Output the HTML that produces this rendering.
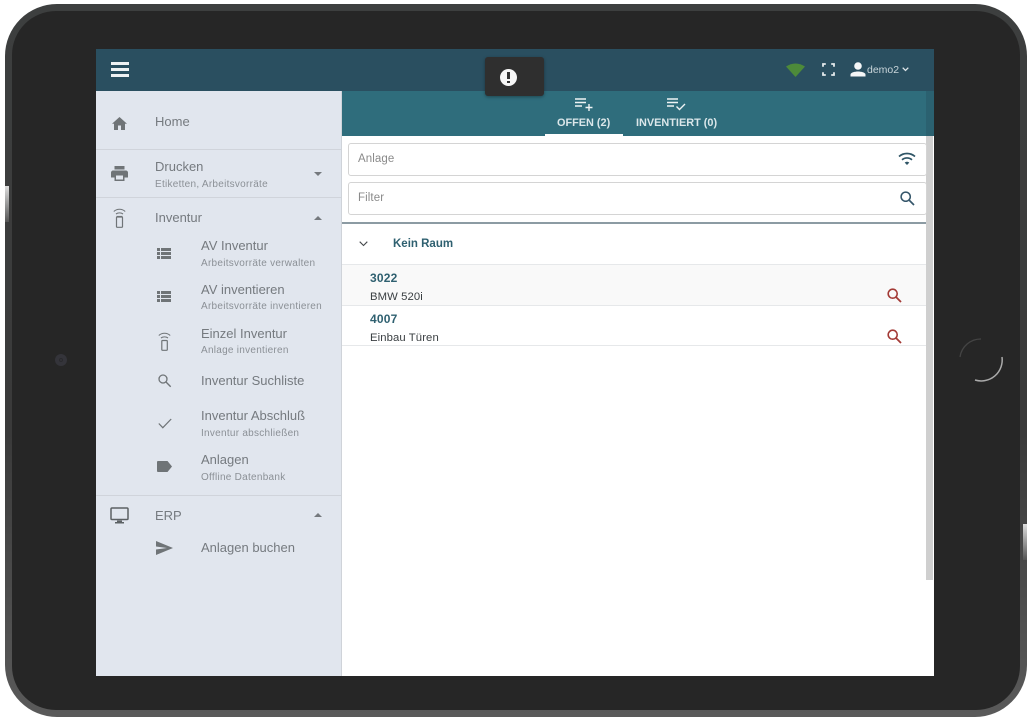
<!DOCTYPE html>
<html><head><meta charset="utf-8">
<style>
html,body{margin:0;padding:0;background:#fff}
#p{position:relative;width:1030px;height:721px;overflow:hidden;background:#fff;font-family:"Liberation Sans",sans-serif;filter:blur(.3px)}
.a{position:absolute;white-space:nowrap}
.t{position:absolute;white-space:nowrap;font-size:13px;color:#757a7f;line-height:16px;letter-spacing:0;margin-top:1px}
.s{position:absolute;white-space:nowrap;font-size:10px;color:#8b9096;line-height:12px;letter-spacing:.27px}
.l{position:absolute;height:1px;background:#d0d4db;left:96px;width:245px}
svg{position:absolute;overflow:visible}
.m{font-size:11.3px;color:#3a3f42;letter-spacing:.1px;line-height:14px;position:absolute;white-space:nowrap}
.n{font-size:12px;font-weight:bold;color:#2f6070;letter-spacing:.2px;line-height:14px;position:absolute;white-space:nowrap}
</style></head><body><div id="p">
<!-- device -->
<div class="a" style="left:5px;top:4px;width:1022px;height:713px;border-radius:52px;background:linear-gradient(#3d3f3f,#3a3a3a 60%,#5a5a5a);"></div>
<div class="a" style="left:12px;top:11px;width:1008px;height:699px;border-radius:44px;background:#262626"></div>
<div class="a" style="left:5px;top:186px;width:4px;height:36px;background:linear-gradient(#ddd,#555)"></div>
<div class="a" style="left:1023px;top:524px;width:4px;height:36px;background:linear-gradient(#ddd,#555)"></div>
<div class="a" style="left:55px;top:354px;width:12px;height:12px;border-radius:50%;background:#34343a"></div>
<div class="a" style="left:59px;top:358px;width:4px;height:4px;border-radius:50%;border:1px solid #2a2a2e;box-sizing:border-box"></div>
<svg style="left:958px;top:337px" width="46" height="46" viewBox="0 0 46 46"><path d="M2 20A21 21 0 0 1 23 2" fill="none" stroke="#444" stroke-width="1.3"/><path d="M44 20A21 21 0 0 1 17 43" fill="none" stroke="#aaa" stroke-width="1.5"/></svg>

<!-- screen -->
<div class="a" style="left:96px;top:49px;width:838px;height:627px;background:#fff"></div>
<div class="a" style="left:96px;top:49px;width:838px;height:42px;background:#2a4f60"></div>
<div class="a" style="left:342px;top:91px;width:592px;height:45px;background:#2f6d7c"></div>
<div class="a" style="left:96px;top:91px;width:245px;height:585px;background:#e1e6ee;border-right:1px solid #cfd3d9"></div>
<!-- scrollbar -->
<div class="a" style="left:926px;top:91px;width:8px;height:45px;background:#2b6170"></div>
<div class="a" style="left:926px;top:136px;width:7px;height:444px;background:#cfcfcf"></div>

<!-- header -->
<div class="a" style="left:111px;top:62px;width:18px;height:3px;background:#eef2f4"></div>
<div class="a" style="left:111px;top:68px;width:18px;height:3px;background:#eef2f4"></div>
<div class="a" style="left:111px;top:74px;width:18px;height:3px;background:#eef2f4"></div>

<div class="a" style="left:485px;top:57px;width:59px;height:39px;border-radius:3px;background:#2f2f2f;box-shadow:0 1px 3px rgba(0,0,0,.35)"></div>
<div class="a" style="left:500px;top:69px;width:17px;height:17px;border-radius:50%;background:#f7f7f7"></div>
<div class="a" style="left:507px;top:72px;width:3px;height:7px;background:#333"></div>
<div class="a" style="left:507px;top:80.5px;width:3px;height:2.5px;background:#333"></div>

<svg style="left:786px;top:63px" width="19" height="14" viewBox="0 0 19 14"><path d="M0 3.500Q9.500 -2.500 19 3.500L9.500 14Z" fill="#4d8a3a"/></svg>
<svg style="left:822px;top:63px" width="13" height="13" viewBox="0 0 13 13"><path d="M1 3.800V1H3.800M9.200 1H12V3.800M1 9.200V12H3.800M9.200 12H12V9.200" fill="none" stroke="#e4e9eb" stroke-width="1.800"/></svg>
<svg style="left:850px;top:62px" width="16" height="15" viewBox="0 0 16 15"><circle cx="8" cy="4" r="3.800" fill="#f4f6f7"/><path d="M.5 14.500V12.500C.5 10.500 5 9.500 8 9.500S15.500 10.500 15.500 12.500V14.500Z" fill="#f4f6f7"/></svg>
<div class="a" style="left:867px;top:63px;font-size:10.500px;line-height:14px;color:#c9d5da">demo2</div>
<svg style="left:902px;top:67px" width="7" height="5" viewBox="0 0 7 5"><path d="M.7.700L3.500 3.500 6.300.700" fill="none" stroke="#dfe6e9" stroke-width="1.300"/></svg>

<!-- tabs -->
<svg style="left:575px;top:98px" width="18" height="13" viewBox="0 0 18 13"><path d="M0 1H11M0 4.500H11M0 8H7M10.500 9.500H17.500M14 6V13" fill="none" stroke="#eef3f4" stroke-width="1.400"/></svg>
<svg style="left:667px;top:98px" width="19" height="13" viewBox="0 0 19 13"><path d="M0 1H11M0 4.500H11M0 8H7M9.500 8.500L12.500 11.500 18 6" fill="none" stroke="#eef3f4" stroke-width="1.400"/></svg>
<div class="a" style="left:557px;top:116px;font-size:10.900px;font-weight:bold;line-height:14px;color:#dbe7ea">OFFEN (2)</div>
<div class="a" style="left:636px;top:116px;font-size:10.900px;font-weight:bold;line-height:14px;color:#dbe7ea">INVENTIERT (0)</div>
<div class="a" style="left:545px;top:134px;width:78px;height:2px;background:#fff"></div>

<!-- inputs -->
<div class="a" style="left:348px;top:143px;width:577px;height:31px;border:1px solid #d4d4d4;border-radius:3px;background:#fff;box-sizing:content-box"></div>
<div class="a" style="left:348px;top:182px;width:577px;height:31px;border:1px solid #d4d4d4;border-radius:3px;background:#fff"></div>
<div class="a" style="left:358px;top:152px;font-size:11.500px;line-height:14px;color:#8a8a8a;letter-spacing:.1px">Anlage</div>
<div class="a" style="left:358px;top:191px;font-size:11.500px;line-height:14px;color:#8a8a8a;letter-spacing:.1px">Filter</div>
<svg style="left:898px;top:152px" width="18" height="14" viewBox="0 0 18 14"><path d="M1 4.500C5.500 .5 12.500 .5 17 4.500M4 7.800C7 5.300 11 5.300 14 7.800" fill="none" stroke="#2f5566" stroke-width="1.700"/><path d="M6.700 10.600C8 9.500 10 9.500 11.300 10.600L9 13Z" fill="#2f5566"/></svg>
<svg style="left:900px;top:191px" width="15" height="15" viewBox="0 0 15 15"><circle cx="5.700" cy="5.700" r="4.600" fill="none" stroke="#35566a" stroke-width="1.500"/><path d="M9 9L14 14" stroke="#35566a" stroke-width="1.700"/></svg>
<div class="a" style="left:342px;top:222px;width:584px;height:2px;background:#8c9ba3"></div>

<!-- list -->
<svg style="left:359px;top:241px" width="9" height="6" viewBox="0 0 9 6"><path d="M.7.700L4.500 4.500 8.300.700" fill="none" stroke="#45494c" stroke-width="1.100"/></svg>
<div class="n" style="left:393px;top:237px;font-size:11.500px;letter-spacing:0">Kein Raum</div>
<div class="a" style="left:342px;top:264px;width:584px;height:1px;background:#e6e8ea"></div>
<div class="a" style="left:342px;top:265px;width:584px;height:40px;background:#f9f9f9"></div>
<div class="a" style="left:342px;top:305px;width:584px;height:1px;background:#e6e8ea"></div>
<div class="a" style="left:342px;top:345px;width:584px;height:1px;background:#e6e8ea"></div>
<div class="n" style="left:370px;top:271px">3022</div>
<div class="m" style="left:370px;top:290px">BMW 520i</div>
<div class="n" style="left:370px;top:312px">4007</div>
<div class="m" style="left:370px;top:331px">Einbau Türen</div>
<svg style="left:887px;top:288px" width="15" height="15" viewBox="0 0 15 15"><circle cx="5.700" cy="5.700" r="4.500" fill="none" stroke="#a33a36" stroke-width="1.600"/><path d="M9 9L14 14" stroke="#a33a36" stroke-width="1.800"/></svg>
<svg style="left:887px;top:329px" width="15" height="15" viewBox="0 0 15 15"><circle cx="5.700" cy="5.700" r="4.500" fill="none" stroke="#a33a36" stroke-width="1.600"/><path d="M9 9L14 14" stroke="#a33a36" stroke-width="1.800"/></svg>

<!-- sidebar -->
<svg style="left:112px;top:117px" width="15" height="13" viewBox="0 0 15 13"><path d="M7.500 0L15 6.800H13V13H9V8.500H6V13H2V6.800H0Z" fill="#6f7477"/></svg>
<div class="t" style="left:155px;top:113px">Home</div>
<div class="l" style="top:149px"></div>
<svg style="left:111px;top:166px" width="17" height="15" viewBox="0 0 17 15"><path d="M3.500 0H13.500V3.500H3.500ZM2 4.500H15C16 4.500 17 5.500 17 6.500V11.500H13.500V15H3.500V11.500H0V6.500C0 5.500 1 4.500 2 4.500ZM5 9.500V13.500H12V9.500Z" fill="#6f7477"/></svg>
<div class="t" style="left:155px;top:158px">Drucken</div>
<div class="s" style="left:155px;top:179px">Etiketten, Arbeitsvorräte</div>
<svg style="left:314px;top:172px" width="8" height="4"><path d="M0 0H8L4 4Z" fill="#75797d"/></svg>
<div class="l" style="top:197px"></div>
<svg style="left:113px;top:208px" width="13" height="20" viewBox="0 0 13 20"><path d="M.8 3.500C4 .5 9 .5 12.200 3.500M3 6C5 4.500 8 4.500 10 6" fill="none" stroke="#6f7477" stroke-width="1.100"/><rect x="3.500" y="9" width="6" height="10.300" rx=".8" fill="none" stroke="#6f7477" stroke-width="1.200"/><path d="M3.500 8.500H9.500" stroke="#6f7477" stroke-width="1.200"/></svg>
<div class="t" style="left:155px;top:209px">Inventur</div>
<svg style="left:314px;top:216px" width="8" height="4"><path d="M0 4H8L4 0Z" fill="#75797d"/></svg>

<svg style="left:157px;top:248px" width="14" height="11" viewBox="0 0 14 11"><path d="M0 0H3V3H0ZM4 0H14V3H4ZM0 4H3V7H0ZM4 4H14V7H4ZM0 8H3V11H0ZM4 8H14V11H4Z" fill="#6f7477"/></svg>
<div class="t" style="left:201px;top:237px">AV Inventur</div>
<div class="s" style="left:201px;top:258px">Arbeitsvorräte verwalten</div>

<svg style="left:157px;top:291px" width="14" height="11" viewBox="0 0 14 11"><path d="M0 0H3V3H0ZM4 0H14V3H4ZM0 4H3V7H0ZM4 4H14V7H4ZM0 8H3V11H0ZM4 8H14V11H4Z" fill="#6f7477"/></svg>
<div class="t" style="left:201px;top:281px">AV inventieren</div>
<div class="s" style="left:201px;top:301px">Arbeitsvorräte inventieren</div>

<svg style="left:158px;top:332px" width="13" height="19" viewBox="0 0 13 19"><path d="M.8 3.500C4 .5 9 .5 12.200 3.500M3 6C5 4.500 8 4.500 10 6" fill="none" stroke="#6f7477" stroke-width="1.100"/><rect x="3.800" y="8.500" width="5.500" height="9.800" rx=".8" fill="none" stroke="#6f7477" stroke-width="1.200"/></svg>
<div class="t" style="left:201px;top:325px">Einzel Inventur</div>
<div class="s" style="left:201px;top:345px">Anlage inventieren</div>

<svg style="left:158px;top:374px" width="13" height="13" viewBox="0 0 13 13"><circle cx="5" cy="5" r="4" fill="none" stroke="#6f7477" stroke-width="1.300"/><path d="M8 8L12.700 12.700" stroke="#6f7477" stroke-width="1.400"/></svg>
<div class="t" style="left:201px;top:372px">Inventur Suchliste</div>

<svg style="left:158px;top:418px" width="14" height="11" viewBox="0 0 14 11"><path d="M.8 5.500L4.800 9.700 13.200 1" fill="none" stroke="#6f7477" stroke-width="1.200"/></svg>
<div class="t" style="left:201px;top:407px">Inventur Abschluß</div>
<div class="s" style="left:201px;top:428px">Inventur abschließen</div>

<svg style="left:157px;top:461px" width="15" height="11" viewBox="0 0 15 11"><path d="M1 0H10.500L15 5.500 10.500 11H1C.4 11 0 10.600 0 10V1C0 .4.400 0 1 0Z" fill="#6f7477"/></svg>
<div class="t" style="left:201px;top:451px">Anlagen</div>
<div class="s" style="left:201px;top:472px">Offline Datenbank</div>
<div class="l" style="top:495px"></div>

<svg style="left:110px;top:507px" width="19" height="17" viewBox="0 0 19 17"><rect x="1" y="1" width="17" height="11.500" rx="1" fill="none" stroke="#5c6164" stroke-width="1.500"/><path d="M7 13.500H12V15H14V16.500H5V15H7Z" fill="#5c6164"/></svg>
<div class="t" style="left:155px;top:507px">ERP</div>
<svg style="left:314px;top:513px" width="8" height="4"><path d="M0 4H8L4 0Z" fill="#75797d"/></svg>
<svg style="left:156px;top:541px" width="17" height="14" viewBox="0 0 17 14"><path d="M0 0L17 7 0 14V8.500L11 7 0 5.500Z" fill="#6f7477"/></svg>
<div class="t" style="left:201px;top:539px">Anlagen buchen</div>
</div></body></html>
